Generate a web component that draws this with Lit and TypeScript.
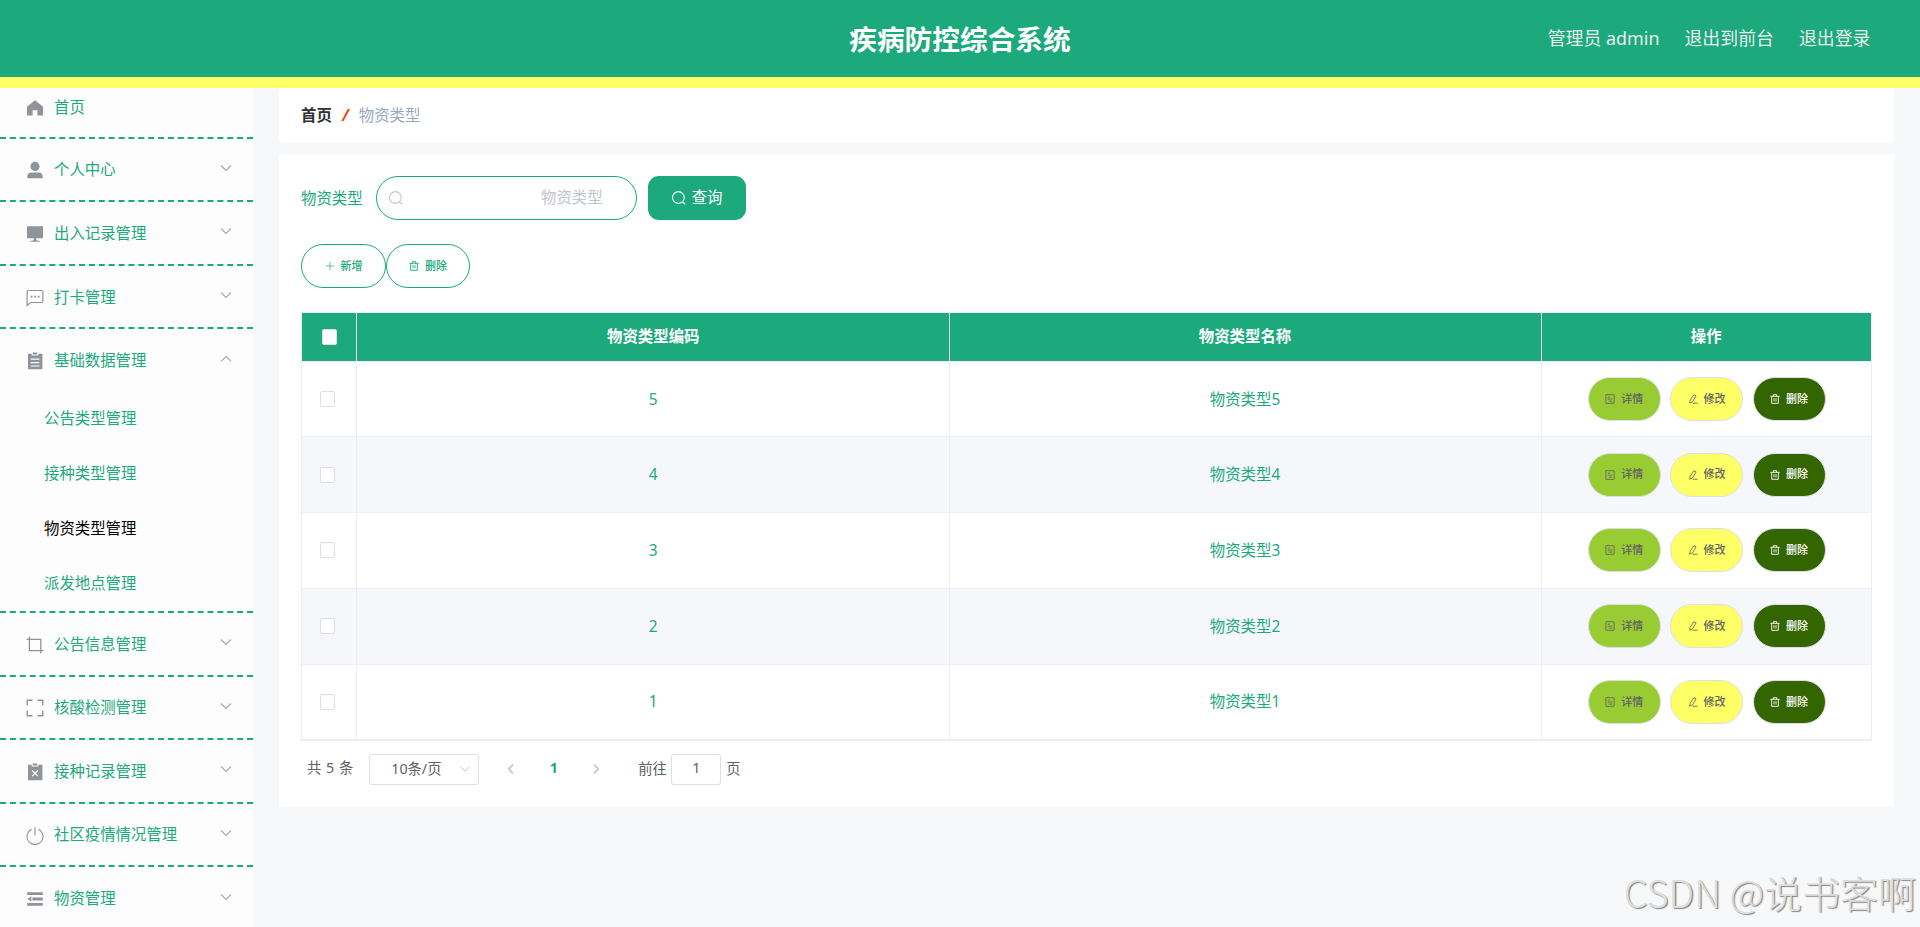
import { LitElement, html, css, svg } from "lit";
import { customElement, property } from "lit/decorators.js";
import { classMap } from "lit/directives/class-map.js";

const line = (d: string, w = 1) =>
  svg`<path d=${d} fill="none" stroke="currentColor" stroke-width=${w} />`;
const solid = (d: string) => svg`<path d=${d} fill="currentColor" fill-rule="evenodd" />`;

// Glyphs on an 18 x 18 grid
const glyphs: Record<string, unknown> = {
  home: solid("M9 1.3 1 7.8V16.5H6.6V11.3H11.4V16.5H17V7.8Z"),
  user: solid("M9 .8a4.6 4.6 0 1 1 0 9.2a4.6 4.6 0 0 1 0-9.2ZM1.3 17.2V15.4C1.3 13 3 11.4 5.3 11.4H12.7C15 11.4 16.7 13 16.7 15.4V17.2Z"),
  screen: solid("M1 1.2H17V13.2H10.3V15.3L13.8 16V16.8H4.2V16L7.7 15.3V13.2H1Z"),
  chat: svg`${line("M2.6 1.5H15.4Q16.9 1.5 16.9 3V12Q16.9 13.5 15.4 13.5H4.8L1.1 16.5V3Q1.1 1.5 2.6 1.5Z", 1.2)}${solid("M4.7 6.8h1.8v1.6H4.7ZM8.2 6.8H10v1.6H8.2ZM11.7 6.8h1.8v1.6h-1.8Z")}`,
  order: solid("M2 1.7H5.7V3.6H12.3V1.7H16.4V17.3H2ZM4.6 6.6V7.8H13.4V6.6ZM4.6 10V11.2H13.4V10ZM4.6 13.4V14.6H13.4V13.4ZM6.7 .6H11.3V2.5H6.7Z"),
  crop: line("M3.4 .8V14.6H17.4M.6 3.4H14.8V17.6", 1.3),
  full: line("M1.2 6.5V1.2H6.5M11.5 1.2H16.8V6.5M16.8 11.5V16.8H11.5M6.5 16.8H1.2V11.5", 1.4),
  claim: svg`${solid("M2 1.7H5.7V3.6H12.3V1.7H16.4V17.3H2ZM6.7 .6H11.3V2.5H6.7Z")}<path d="M6.2 7.5 11.8 13.1M11.8 7.5 6.2 13.1" stroke="#fdfdfd" stroke-width="1.3" />`,
  power: line("M5.6 2.3A8 8 0 1 0 12.4 2.3M9 .3V8.6", 1.1),
  fold: solid("M1.2 2.2H16.8V5.1H1.2ZM6.4 7.5H16.8V10.5H6.4ZM1.2 12.9H16.8V15.8H1.2ZM5.4 6.3V11.7L1.4 9Z"),
  down: line("M4 6.5 9 11.4 14 6.5", 1.1),
  up: line("M4 11.4 9 6.5 14 11.4", 1.1),
  left: line("M11.3 4 6.4 9 11.3 14", 1.9),
  right: line("M6.7 4 11.6 9 6.7 14", 1.9),
  search: line("M8.3 1.8a6.6 6.6 0 1 1 0 13.2a6.6 6.6 0 0 1 0-13.2ZM13 13.2 16 16.2", 1.25),
  plus: line("M9 1.4V16.6M1.4 9H16.6", 1.2),
  trash: line("M.6 4.2H17.4M6 4V1.2H12V4M3 4.4V16.8H15V4.4M7.2 7.4V13.4M10.8 7.4V13.4", 1.6),
  doc: line("M1.6 1.2H16.4V16.8H1.6ZM5 5.6H9M5 9.2H13M7 12.8H13", 1.5),
  edit: line("M10.6 1.2 14.6 3.4 8 14.4 3.2 16.4 3.6 11.8ZM8.5 16.6H17.4", 1.5),
};

@customElement("ui-glyph")
class UiGlyph extends LitElement {
  @property() name = "";
  static styles = css`
    :host { display: inline-block; width: 18px; height: 18px; flex: none; }
    svg { display: block; width: 100%; height: 100%; }
  `;
  render() {
    return html`<svg viewBox="0 0 18 18">${glyphs[this.name]}</svg>`;
  }
}

@customElement("app-root")
class AppRoot extends LitElement {
  menu = [
    { icon: "home", label: "首页" },
    { icon: "user", label: "个人中心", arrow: "down" },
    { icon: "screen", label: "出入记录管理", arrow: "down" },
    { icon: "chat", label: "打卡管理", arrow: "down" },
    {
      icon: "order", label: "基础数据管理", arrow: "up",
      children: ["公告类型管理", "接种类型管理", "物资类型管理", "派发地点管理"],
    },
    { icon: "crop", label: "公告信息管理", arrow: "down" },
    { icon: "full", label: "核酸检测管理", arrow: "down" },
    { icon: "claim", label: "接种记录管理", arrow: "down" },
    { icon: "power", label: "社区疫情情况管理", arrow: "down" },
    { icon: "fold", label: "物资管理", arrow: "down" },
  ];
  active = "物资类型管理";
  rows = [5, 4, 3, 2, 1];

  static styles = css`
    * { box-sizing: border-box; }
    :host {
      display: flex; flex-direction: column; height: 927px; overflow: hidden; position: relative;
      font: 15.4px/1.5 "Noto Sans", "Noto Sans CJK SC", sans-serif;
      color: #1ca97b; background: #f7f8fa; white-space: nowrap;
    }
    .top {
      height: 88px; flex: none; background: #1ca97b; border-bottom: 11px solid #ff6;
      display: grid; grid-template-columns: 1fr auto 1fr; align-items: center;
    }
    .title { grid-column: 2; font-size: 27.7px; font-weight: 700; color: #fff; line-height: 40px; padding-top: 1px; }
    .links { display: flex; justify-content: flex-end; gap: 25px; padding-right: 49.5px; font-size: 17.9px; color: #e8efec; }
    .body { flex: 1; min-height: 0; display: flex; }
    .side { width: 253px; flex: none; background: #fdfdfd; overflow: hidden; }
    .item { border-bottom: 2px dashed #1ca97b; }
    .head { height: 61.6px; display: flex; align-items: center; padding: 1px 18px 0 26px; }
    .item:first-child .head { height: 48.6px; padding-bottom: 10px; }
    .head ui-glyph { color: #909399; margin-top: 1px; }
    .head span { flex: 1; padding-left: 10px; }
    .head .arrow { width: 18px; height: 18px; margin-top: -4px; opacity: .8; }
    .sub { height: 55px; display: flex; align-items: center; padding-left: 44px; }
    .sub.on { color: #000; }
    .main { flex: 1; padding: 0 26px; display: flex; flex-direction: column; gap: 11px; }
    .crumb { height: 55px; background: #fff; border-radius: 4px; display: flex; align-items: center; padding-left: 22px; }
    .crumb b { color: #303133; font-weight: 700; }
    .crumb i { color: #ff3c00; font-weight: 700; padding: 0 10px 0 10.5px; }
    .crumb span { color: #97a8be; }
    .card { height: 653px; background: #fff; padding: 22px 22px 0; }
    .row { display: flex; align-items: center; height: 44px; }
    .row label { padding-top: 1px; }
    .input {
      width: 261px; height: 44px; margin: 0 11px 0 13px; border: 1px solid #1ca97b; border-radius: 22px;
      display: flex; align-items: center; justify-content: space-between; padding: 0 33px 0 11px; color: #c0c4cc;
    }
    .input ui-glyph, .query ui-glyph { width: 16px; height: 16px; }
    .query {
      width: 98px; height: 44px; border-radius: 11px; background: #1ca97b; color: #fff;
      display: flex; align-items: center; justify-content: center; gap: 5px;
    }
    .tools { margin-top: 24px; }
    .tool {
      width: 85px; height: 44px; border: 1px solid #1ca97b; border-radius: 22px; font-size: 11px; font-weight: 500;
      display: flex; align-items: center; justify-content: center; gap: 6px;
    }
    .tool + .tool { width: 84px; }
    .tool ui-glyph, .op ui-glyph { width: 10px; height: 10px; }
    .table { margin-top: 24px; border: 1px solid #ebeef5; border-bottom-width: 2px; width: 1571px; }
    .tr { display: grid; grid-template-columns: 55px 592.5px 592px 1fr; height: 75.8px; }
    .tr > div { border-right: 1px solid #ebeef5; border-bottom: 1px solid #ebeef5; display: flex; align-items: center; justify-content: center; }
    .tr > div:last-child { border-right: 0; }
    .tr:nth-child(odd) { background: #f5f7fa; }
    .tr:nth-child(2) { height: 75.2px; }
    .tr:last-child { height: 74.5px; }
    .tr:last-child > div { border-bottom: 0; }
    .tr.th { height: 49px; background: #1ca97b; color: #fff; font-weight: 700; }
    .tr > div:nth-child(2) { padding-left: 1px; }
    .tr > div:first-child { justify-content: flex-start; padding-left: 18px; }
    .tr.th > div:first-child { padding-left: 20px; }
    .box { width: 15px; height: 16px; border: 1px solid #dcdfe6; border-radius: 2px; background: #fff; }
    .tr .ops { gap: 9.5px; padding-left: 1px; }
    .op {
      width: 73px; height: 44px; border: 1px solid #dcdfe6; border-radius: 22px; color: #606266;
      font-size: 11px; font-weight: 500; display: flex; align-items: center; justify-content: center; gap: 6px;
    }
    .view { background: #9c3; width: 72.5px; }
    .edit { background: #ff6; }
    .del { background: #360; color: #fff; }
    .pager { display: flex; align-items: center; height: 31px; margin-top: 12.5px; padding-left: 6px; font-size: 14.3px; color: #606266; }
    .total { word-spacing: 1px; margin-top: -2px; }
    .select {
      width: 110px; height: 31px; border: 1px solid #dcdfe6; border-radius: 3px; margin-left: 16px;
      display: flex; align-items: center; justify-content: space-between; padding: 0 5px 0 21px;
    }
    .pager ui-glyph { width: 16px; height: 16px; color: #c0c4cc; }
    .prev { margin-left: 24px; }
    .num { width: 69px; text-align: center; color: #1ca97b; font-weight: 700; margin-top: -2px; }
    .go { padding-left: 34px; }
    .page { width: 50px; height: 31px; border: 1px solid #dcdfe6; border-radius: 3px; margin: 0 5px 0 4.5px; display: flex; align-items: center; justify-content: center; padding-bottom: 2px; }
    .mark {
      position: absolute; right: 4px; bottom: 8.5px; font: 300 38px/54px "Noto Sans CJK SC", sans-serif;
      color: #dcdddd; text-shadow: 1.3px 1.3px 1px #868686;
    }
  `;

  render() {
    return html`
      <header class="top">
        <div class="title">疾病防控综合系统</div>
        <nav class="links"><span>管理员 admin</span><span>退出到前台</span><span>退出登录</span></nav>
      </header>
      <div class="body">
        <aside class="side">
          ${this.menu.map((m) => html`<div class="item">
            <div class="head">
              <ui-glyph name=${m.icon}></ui-glyph><span>${m.label}</span>
              ${m.arrow ? html`<ui-glyph class="arrow" name=${m.arrow}></ui-glyph>` : ""}
            </div>
            ${(m.children ?? []).map((c) => html`<div class=${classMap({ sub: true, on: c === this.active })}>${c}</div>`)}
          </div>`)}
        </aside>
        <main class="main">
          <div class="crumb"><b>首页</b><i>/</i><span>物资类型</span></div>
          <section class="card">
            <div class="row">
              <label>物资类型</label>
              <div class="input"><ui-glyph name="search"></ui-glyph><span>物资类型</span></div>
              <div class="query"><ui-glyph name="search"></ui-glyph><span>查询</span></div>
            </div>
            <div class="row tools">
              <div class="tool"><ui-glyph name="plus"></ui-glyph>新增</div>
              <div class="tool"><ui-glyph name="trash"></ui-glyph>删除</div>
            </div>
            <div class="table">
              <div class="tr th">
                <div><span class="box"></span></div><div>物资类型编码</div><div>物资类型名称</div><div>操作</div>
              </div>
              ${this.rows.map((n) => html`<div class="tr">
                <div><span class="box"></span></div><div>${n}</div><div>物资类型${n}</div>
                <div class="ops">
                  <span class="op view"><ui-glyph name="doc"></ui-glyph>详情</span>
                  <span class="op edit"><ui-glyph name="edit"></ui-glyph>修改</span>
                  <span class="op del"><ui-glyph name="trash"></ui-glyph>删除</span>
                </div>
              </div>`)}
            </div>
            <div class="pager">
              <span class="total">共 5 条</span>
              <div class="select"><span>10条/页</span><ui-glyph name="down"></ui-glyph></div>
              <ui-glyph class="prev" name="left"></ui-glyph><span class="num">1</span><ui-glyph name="right"></ui-glyph>
              <span class="go">前往</span><span class="page">1</span><span>页</span>
            </div>
          </section>
        </main>
      </div>
      <div class="mark">CSDN @说书客啊</div>
    `;
  }
}
